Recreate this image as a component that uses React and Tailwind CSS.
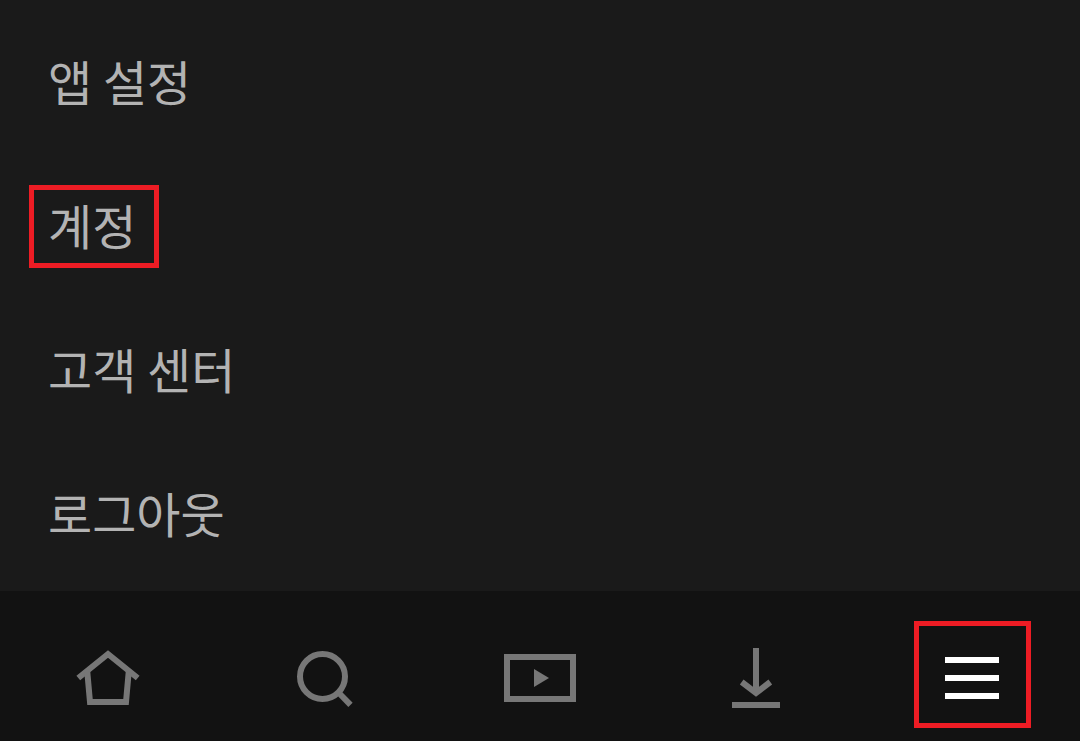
const menuItems = [
    { title: "앱 설정", href: "#settings" },
    { title: "계정", href: "#account", highlighted: true },
    { title: "고객 센터", href: "#help" },
    { title: "로그아웃", href: "#logout" }
]

const HomeIcon = () => (
    <svg viewBox="0 0 72 72" className="size-[72px]" fill="none" stroke="currentColor" strokeWidth="6" aria-hidden="true">
        <path d="M6.3 36 36 12l29.7 24" />
        <path d="M15.3 30 18 60h36l2.7-30" />
    </svg>
)

const SearchIcon = () => (
    <svg viewBox="0 0 72 72" className="size-[72px]" fill="none" stroke="currentColor" strokeWidth="6" aria-hidden="true">
        <circle cx="34.5" cy="34.5" r="22.5" />
        <path d="M50 50l12.5 12.8" />
    </svg>
)

const VideoIcon = () => (
    <svg viewBox="0 0 72 72" className="size-[72px]" fill="none" stroke="currentColor" strokeWidth="6" aria-hidden="true">
        <path d="M3 15h66v42H3z" />
        <path d="M30 27v18l15-9z" fill="currentColor" stroke="none" />
    </svg>
)

const DownloadIcon = () => (
    <svg viewBox="0 0 72 72" className="size-[72px]" fill="none" stroke="currentColor" strokeWidth="6" aria-hidden="true">
        <path d="M36 6v44M21.7 40 36 51l14.3-11M12 63h48" />
    </svg>
)

const MenuIcon = () => (
    <svg viewBox="0 0 72 72" className="size-[72px]" fill="none" stroke="currentColor" strokeWidth="6" aria-hidden="true">
        <path d="M9 18h54M9 36h54M9 54h54" />
    </svg>
)

const tabs = [
    { label: "홈", Icon: HomeIcon },
    { label: "검색", Icon: SearchIcon },
    { label: "공개 예정", Icon: VideoIcon },
    { label: "저장", Icon: DownloadIcon },
    { label: "더 보기", Icon: MenuIcon, active: true }
]

const App = () => {
    return (
        <div className="flex min-h-screen flex-col bg-[#1a1a1a] font-['Noto_Sans_CJK_KR',sans-serif]">
            <main className="flex-1 px-[29px] pt-[41px] pb-8">
                <ul className="flex flex-col gap-[61px]">
                    {menuItems.map((item) => (
                        <li key={item.title} className="flex">
                            <a
                                href={item.href}
                                className={
                                    item.highlighted
                                        ? "flex h-[83px] items-center border-[5px] border-[#ed1c24] pr-[18px] pb-[6px] pl-[14px] text-5xl text-[#b3b3b3]"
                                        : "flex h-[83px] items-center border-[5px] border-transparent pr-[18px] pb-[6px] pl-[14px] text-5xl text-[#b3b3b3]"
                                }
                            >
                                {item.title}
                            </a>
                        </li>
                    ))}
                </ul>
            </main>
            <nav className="grid h-[150px] grid-cols-5 bg-[#121212] pt-[30px]">
                {tabs.map(({ label, Icon, active }) => (
                    <div key={label} className="flex justify-center">
                        <button
                            type="button"
                            aria-label={label}
                            className={
                                active
                                    ? "flex h-[107px] w-[117px] items-center justify-center border-[5px] border-[#ed1c24] pt-[6px] text-white"
                                    : "flex h-[107px] w-[117px] items-center justify-center pt-[6px] text-[#777777]"
                            }
                        >
                            <Icon />
                        </button>
                    </div>
                ))}
            </nav>
        </div>
    )
}

export default App
